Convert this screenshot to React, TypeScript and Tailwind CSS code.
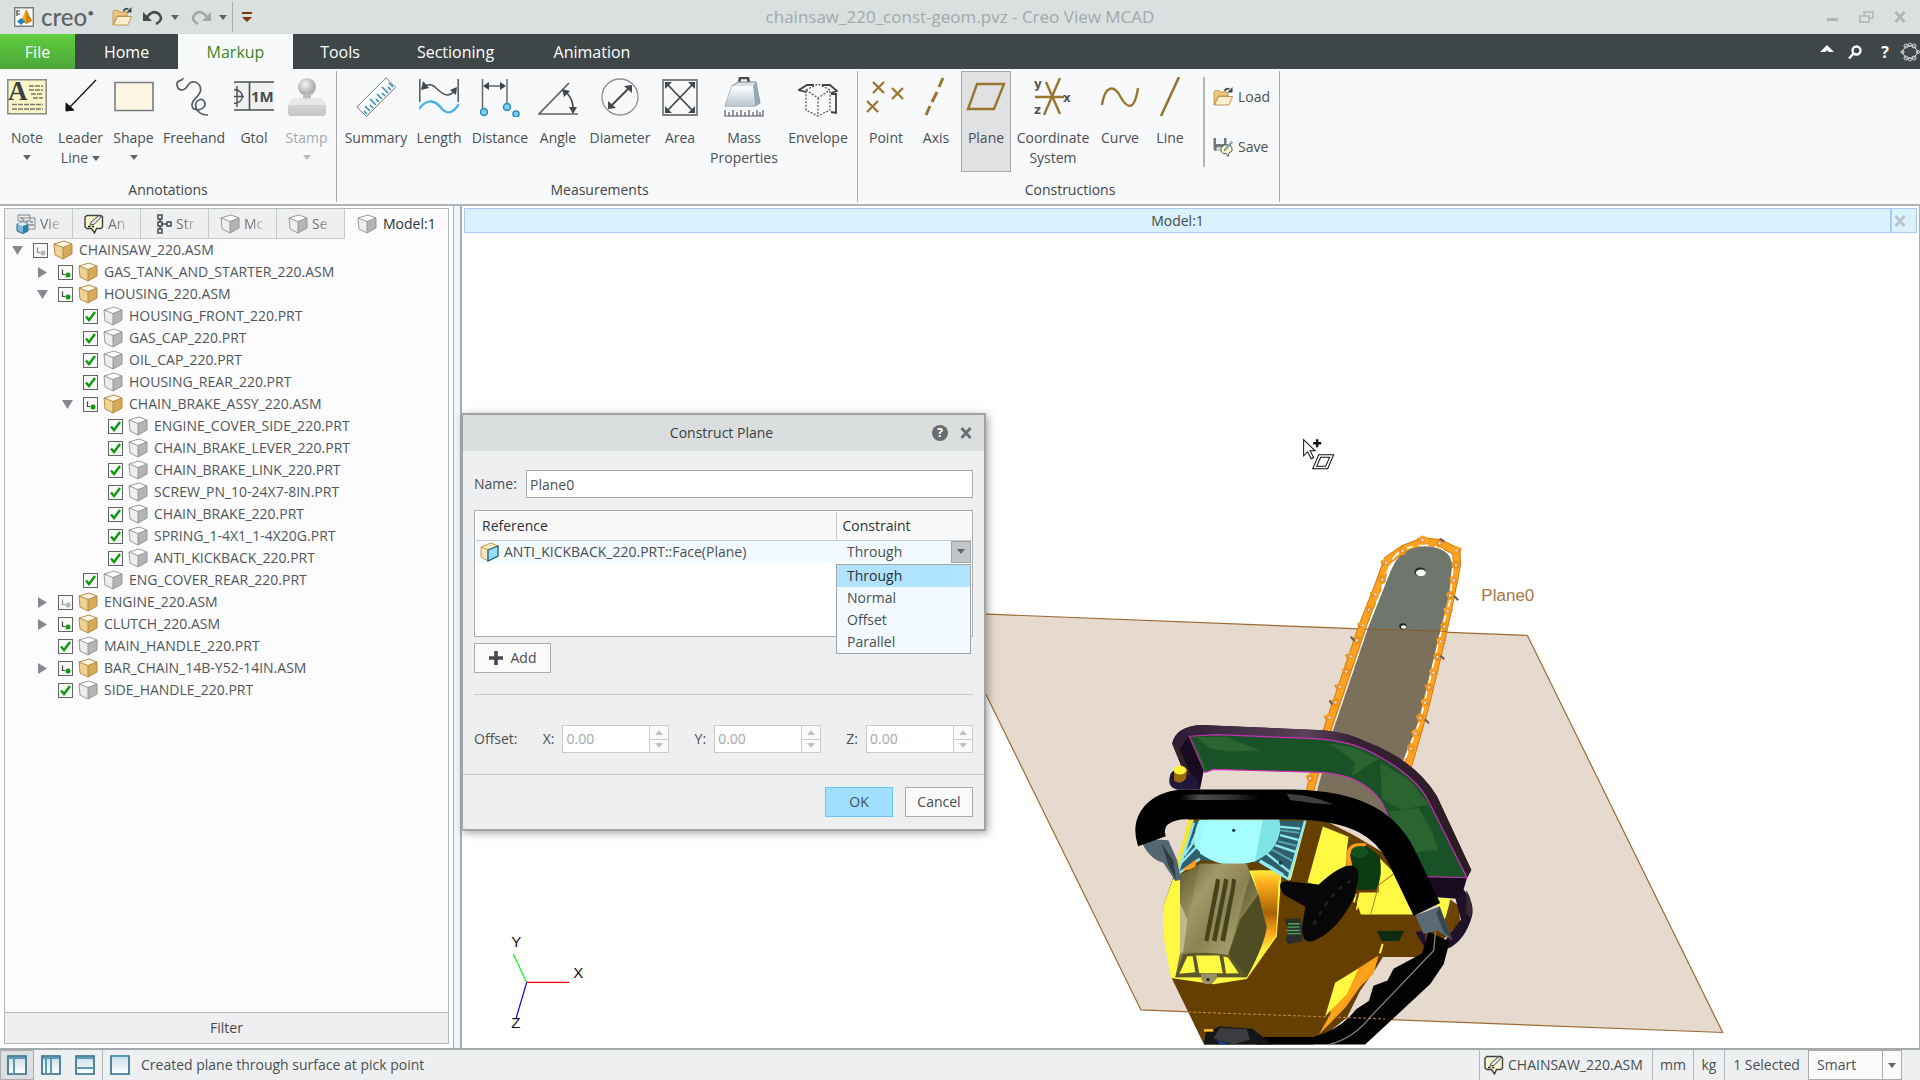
import React, { useState } from 'react';

type NodeState = 'on' | 'linked' | 'partial';

interface TreeItem {
  name: string;
  level: number;
  state: NodeState;
  arrow?: 'open' | 'closed';
}

const tree: TreeItem[] = [
  { name: 'CHAINSAW_220.ASM', level: 0, state: 'partial', arrow: 'open' },
  { name: 'GAS_TANK_AND_STARTER_220.ASM', level: 1, state: 'linked', arrow: 'closed' },
  { name: 'HOUSING_220.ASM', level: 1, state: 'linked', arrow: 'open' },
  { name: 'HOUSING_FRONT_220.PRT', level: 2, state: 'on' },
  { name: 'GAS_CAP_220.PRT', level: 2, state: 'on' },
  { name: 'OIL_CAP_220.PRT', level: 2, state: 'on' },
  { name: 'HOUSING_REAR_220.PRT', level: 2, state: 'on' },
  { name: 'CHAIN_BRAKE_ASSY_220.ASM', level: 2, state: 'linked', arrow: 'open' },
  { name: 'ENGINE_COVER_SIDE_220.PRT', level: 3, state: 'on' },
  { name: 'CHAIN_BRAKE_LEVER_220.PRT', level: 3, state: 'on' },
  { name: 'CHAIN_BRAKE_LINK_220.PRT', level: 3, state: 'on' },
  { name: 'SCREW_PN_10-24X7-8IN.PRT', level: 3, state: 'on' },
  { name: 'CHAIN_BRAKE_220.PRT', level: 3, state: 'on' },
  { name: 'SPRING_1-4X1_1-4X20G.PRT', level: 3, state: 'on' },
  { name: 'ANTI_KICKBACK_220.PRT', level: 3, state: 'on' },
  { name: 'ENG_COVER_REAR_220.PRT', level: 2, state: 'on' },
  { name: 'ENGINE_220.ASM', level: 1, state: 'partial', arrow: 'closed' },
  { name: 'CLUTCH_220.ASM', level: 1, state: 'linked', arrow: 'closed' },
  { name: 'MAIN_HANDLE_220.PRT', level: 1, state: 'on' },
  { name: 'BAR_CHAIN_14B-Y52-14IN.ASM', level: 1, state: 'linked', arrow: 'closed' },
  { name: 'SIDE_HANDLE_220.PRT', level: 1, state: 'on' },
];

/* ---------- small icons ---------- */

const Caret = ({ className = 'text-[#5f6467]' }: { className?: string }) => (
  <svg viewBox="0 0 8 5" className={`w-2 h-[5px] ${className}`} fill="currentColor"><path d="M0 0h8L4 5z" /></svg>
);

const Cross = ({ className = '' }: { className?: string }) => (
  <svg viewBox="0 0 12 12" className={`w-3 h-3 ${className}`} fill="none" stroke="currentColor" strokeWidth="2.800"><path d="M1.500 1l9 10M10.500 1l-9 10" /></svg>
);

const Cube = ({ gold = false }: { gold?: boolean }) => (
  <svg viewBox="0 0 20 20" className="w-5 h-5 shrink-0">
    <path d="M1 4L11 1l8 3v10l-9 5-8-4z" fill={gold ? '#f0d393' : '#eeeeee'} />
    <path d="M1 4l10-3 8 3-9 3.500z" fill={gold ? '#fbf3df' : '#ffffff'} />
    <path d="M10 7.500L19 4v10l-9 5z" fill={gold ? '#d9ab58' : '#b3b5b7'} />
    <path d="M1 4l10-3 8 3v10l-9 5-8-4zM1 4l9 3.500L19 4M10 7.500V19" fill="none" stroke={gold ? '#a88443' : '#8c8e90'} strokeWidth=".9" />
  </svg>
);

const FaceCube = () => (
  <svg viewBox="0 0 20 20" className="w-5 h-5 shrink-0">
    <path d="M1 5l10-4 7 3v10L8 19l-7-4z" fill="#fbe7bd" stroke="#c59b50" strokeWidth="1" />
    <path d="M1 5l7 3v11" fill="none" stroke="#c59b50" />
    <path d="M8 8l10-4v10L8 19z" fill="#9adcfb" stroke="#1c6683" strokeWidth="1.300" />
  </svg>
);

const Folder = () => (
  <svg viewBox="0 0 20 20" className="w-5 h-5 shrink-0">
    <path d="M1 5l1-1.500h4L7.500 5H15v4H5L1 18z" fill="#ecc57e" stroke="#b98d45" strokeWidth=".8" />
    <path d="M5.500 9.500H19.500L16 18H1.500z" fill="#fdf0cf" stroke="#b98d45" strokeWidth=".9" />
    <path d="M11.500 4Q13 .8 16.500 2" fill="none" stroke="#3f4446" strokeWidth="1.800" />
    <path d="M19.500 0v5.500h-5z" fill="#3f4446" />
  </svg>
);

const SaveIcon = () => (
  <svg viewBox="0 0 20 20" className="w-5 h-5 shrink-0">
    <path d="M.5 1h13v13H2L.5 12.500z" fill="#75797c" />
    <path d="M3 1h8v6H3z" fill="#f3f4f5" />
    <path d="M3.500 10h5v4h-5z" fill="#d3d5d7" />
    <path d="M8 11l3-3h6l2 3v3l-3 2-1 3.500-2-3h-3L8 14z" fill="#fdf9cf" stroke="#55595b" />
    <path d="M11 14l1-2.500L18.500 4.500l1 1L13 13z" fill="#8cc8e4" stroke="#55595b" strokeWidth=".6" />
  </svg>
);

const NoteBubble = () => (
  <svg viewBox="0 0 20 20" className="w-5 h-5 shrink-0">
    <path d="M3 1.500h14l1.500 1.500v10L17 14.500h-4.500l-2 4.500-3-4.500H3L1 13V3z" fill="#fdf9cf" stroke="#3d4143" strokeWidth="1.400" />
    <path d="M6 11l1.500-3.500L15 1.500l2 1.800-6.800 7z" fill="#e4e6e8" stroke="#44484a" strokeWidth="1" />
    <path d="M4 12.500h2.500M8 12.500h2" stroke="#222" strokeWidth="1.400" />
  </svg>
);

const ViewIcon = () => (
  <svg viewBox="0 0 20 20" className="w-5 h-5 shrink-0">
    <path d="M2 1h12v6H2zM7 4h12v11H7z" fill="#e9ebec" stroke="#84898c" />
    <path d="M4 4h3M10 8h2M14 8h3M13 11h5" stroke="#84898c" strokeWidth="1.400" />
    <path d="M1 10l6-2 5 2v7l-5 2.500L1 17z" fill="#7fb9d4" stroke="#1f5e7c" strokeWidth=".9" />
    <path d="M1 10l6-2 5 2-5 2z" fill="#def3fd" />
    <path d="M7 12l5-2v7l-5 2.500z" fill="#2d7ea5" />
  </svg>
);

const StructIcon = () => (
  <svg viewBox="0 0 20 20" className="w-5 h-5 shrink-0" fill="none" stroke="#44494c" strokeWidth="1.500">
    <path d="M6 1h4v4H6zM6 8h4v4H6zM6 15h4v4H6zM15 8h4v4h-4zM8 5v3M8 12v3M10 10h5" />
  </svg>
);

/* ---------- ribbon icons, 40x40 ---------- */

const Big = ({ children }: { children: React.ReactNode }) => (
  <svg viewBox="0 0 40 40" className="w-10 h-10" fill="none">{children}</svg>
);

const NoteBig = () => (
  <Big>
    <path d="M.8 2.800h38.400v34H.8z" fill="#fbf6c8" stroke="#888b84" strokeWidth="1.500" />
    <text x="1" y="23" fontFamily="Liberation Serif, serif" fontWeight="700" fontSize="27" fill="#3e3f3f">A</text>
    <path d="M22 9h14M22 13h14M24 17h12M26 21h10M5 27.500h31M5 32h31" stroke="#77776a" strokeWidth="1.300" strokeDasharray="5 1" />
  </Big>
);
const LeaderBig = () => (
  <Big><path d="M35 3L8 31" stroke="#111" strokeWidth="1.300" /><path d="M5 34v-8l8 7z" fill="#111" stroke="#111" /></Big>
);
const ShapeBig = () => <Big><path d="M1 5.500h38v28H1z" fill="#fef6e4" stroke="#7a7c7d" strokeWidth="1.600" /></Big>;
const FreehandBig = () => (
  <Big><path d="M9 1C9 5 2 2 3 8c1 6 6 6 9 3 3-4 4-7 9-6 6 2 7 8 4 12-3 5-7 6-7 11 0 6 8 6 12 2 3-4-1-9-5-7-5 2-4 9 0 12 3 3 6 3 9 3" stroke="#5b5f62" strokeWidth="1.700" /></Big>
);
const GtolBig = () => (
  <Big>
    <path d="M0 5h40v28H0z" fill="#f0f1f2" />
    <path d="M0 5h40M0 33h40M15.500 5v28" stroke="#4b4f52" strokeWidth="1.600" />
    <path d="M0 12.500c11 0 11 14 0 14M0 19.500h10M3 9v21" stroke="#4b4f52" strokeWidth="1.400" />
    <text x="17" y="25" fontFamily="Open Sans, sans-serif" fontWeight="700" fontSize="15" fill="#45494b">1M</text>
  </Big>
);
const StampBig = () => (
  <Big>
    <circle cx="20" cy="10" r="9" fill="url(#stampG)" />
    <path d="M16 17h8v6h-8z" fill="#bcbec0" />
    <path d="M5 21h30l4 8v8l-2 2H3l-2-2v-8z" fill="url(#stampB)" />
    <path d="M5 21h11q4 4 8 0h11l3 7H2z" fill="#e7e8ea" />
    <defs>
      <radialGradient id="stampG" cx=".4" cy=".35"><stop offset="0" stopColor="#f4f4f5" /><stop offset="1" stopColor="#aeb0b2" /></radialGradient>
      <linearGradient id="stampB" x2="0" y2="1"><stop offset="0" stopColor="#dcdddf" /><stop offset="1" stopColor="#c3c5c7" /></linearGradient>
    </defs>
  </Big>
);
const SummaryBig = () => (
  <Big>
    <path d="M.8 30L30 .8l9.500 9.500L10.500 39.500z" fill="#fbfcfd" stroke="#73787b" strokeWidth="1" strokeLinejoin="round" />
    <path d="M11 37l-3-3M14 34l-5-5M17 31l-3-3M20 28l-6-6M23 25l-3-3M26 22l-5-5M29 19l-3-3M32 16l-6-6M35 13l-3-3M37 10l-4-4" stroke="#3388b2" strokeWidth="1.500" />
  </Big>
);
const LengthBig = () => (
  <Big>
    <path d="M.8 2v23M39.200 2v23M4 10C16 2 18 17 28 18q5 0 9-6" stroke="#515659" strokeWidth="1.500" />
    <path d="M2 13l2-9 6 7zM38 10l-1 8-6-5z" fill="#45494b" />
    <path d="M0 32c9-12 17-8 23 0 6 6 11 4 17-5" stroke="#45b1e2" strokeWidth="2.300" />
  </Big>
);
const DistanceBig = () => (
  <Big>
    <path d="M2.500 2v29M27 2v24M6 9h17" stroke="#5f6467" strokeWidth="1.400" />
    <path d="M3 9l6-4v8zM26 9l-6-4v8z" fill="#3f4345" />
    <g fill="#7ccef2" stroke="#2f8eb6" strokeWidth="1.500"><circle cx="4" cy="35" r="3.500" /><circle cx="27" cy="30" r="3.500" /><circle cx="36" cy="37" r="3" /></g>
  </Big>
);
const AngleBig = () => (
  <Big>
    <path d="M31 6L1 37h39" stroke="#5d6265" strokeWidth="1.700" />
    <path d="M28 15q7 7 7 16" stroke="#45494b" strokeWidth="1.700" />
    <path d="M24 12l8 2-6 6zM31 30h8l-4 7z" fill="#45494b" />
  </Big>
);
const DiameterBig = () => (
  <Big>
    <circle cx="20" cy="20" r="18" stroke="#8d9194" strokeWidth="1.300" />
    <path d="M11 29L29 11" stroke="#45494b" strokeWidth="2" />
    <path d="M8 32v-8l8 7zM32 8v8l-8-7z" fill="#45494b" />
  </Big>
);
const AreaBig = () => (
  <Big>
    <path d="M3 3h34v35H3z" stroke="#7d8184" strokeWidth="1.800" />
    <path d="M8 8l24 25M32 8L8 33" stroke="#45494b" strokeWidth="1.800" />
    <path d="M5 5h7l-7 7zM35 5v7l-7-7zM5 36v-7l7 7zM35 36h-7l7-7z" fill="#45494b" />
  </Big>
);
const MassBig = () => (
  <Big>
    <path d="M15 6l1-5h8l1 5" stroke="#45494b" strokeWidth="2.500" />
    <path d="M8 9l6-4h18l4 21-5 3H1z" fill="#d7e0e6" stroke="#84898c" />
    <path d="M29 9l3-4 4 21-5 3z" fill="#8fa9b7" />
    <path d="M8 9h21l2 20H1z" fill="url(#massG)" />
    <path d="M1 33v6h38v-6M5 35v4M9 33v6M13 35v4M17 33v6M21 35v4M25 33v6M29 35v4M33 33v6M36 35v4" stroke="#55595c" strokeWidth="1.200" />
    <defs><linearGradient id="massG" x2="0" y2="1"><stop offset="0" stopColor="#ffffff" /><stop offset="1" stopColor="#b9c7cf" /></linearGradient></defs>
  </Big>
);
const EnvelopeBig = () => (
  <Big>
    <path d="M8 13l12-6 12 6v20l-12 6-12-6zM8 13l12 8 12-8M20 21v18" stroke="#55595c" strokeWidth="1.300" strokeDasharray="2 1.500" />
    <path d="M16 8H9L1 13l7 2M24 8h8l7 6-6 2M33 17h5v19l-5-1" stroke="#3f4345" strokeWidth="1.800" />
  </Big>
);
const gold = '#99752f';
const PointBig = () => <Big><path d="M7 5l11 11M18 5L7 16M26 11l11 11M37 11L26 22M1 24l11 11M12 24L1 35" stroke={gold} strokeWidth="2.200" /></Big>;
const AxisBig = () => <Big><path d="M27 1l-4 9M21 15l-5 10M14 29l-4 9" stroke={gold} strokeWidth="3" /></Big>;
const PlaneBig = () => <Big><path d="M11 7h27L28 32H2z" stroke={gold} strokeWidth="2.400" /></Big>;
const CoordBig = () => (
  <Big>
    <path d="M2 20h29M13 5l14 32M27 1L11 38" stroke={gold} strokeWidth="2.400" />
    <g fontFamily="DejaVu Sans, sans-serif" fontWeight="700" fontSize="12" fill="#515659"><text x="1" y="11">y</text><text x="30" y="25">x</text><text x="1" y="37">z</text></g>
  </Big>
);
const CurveBig = () => <Big><path d="M2 28C5 8 14 8 20 19s14 18 18-8" stroke={gold} strokeWidth="2.400" /></Big>;
const LineBig = () => <Big><path d="M29 0L11 39" stroke={gold} strokeWidth="2.600" /></Big>;

interface ToolProps {
  label: string;
  icon: React.ReactNode;
  width: string;
  second?: string;
  caret?: 'below' | 'inline';
  active?: boolean;
  disabled?: boolean;
}

const Tool = ({ label, icon, width, second, caret, active, disabled }: ToolProps) => (
  <button
    disabled={disabled}
    className={`${width} h-[101px] pt-[5px] shrink-0 flex flex-col items-center border leading-5 ${active ? 'bg-[#dfe1e3] border-[#a6aaac]' : 'border-transparent'} ${disabled ? 'text-[#a6abae]' : 'text-[#4a4f52]'}`}
  >
    {icon}
    <span className="mt-[11px] whitespace-nowrap">{label}</span>
    {second && (
      <span className="flex items-center gap-1">{second}{caret === 'inline' && <Caret />}</span>
    )}
    {caret === 'below' && <span className="h-[18px] flex items-center"><Caret className={disabled ? 'text-[#b5b9bc]' : 'text-[#5f6467]'} /></span>}
  </button>
);

const Group = ({ title, width, children }: { title: string; width: string; children: React.ReactNode }) => (
  <section className={`${width} shrink-0 my-[2px] border-r border-[#a9adb0] flex flex-col`}>
    <div className="flex flex-1">{children}</div>
    <h2 className="h-6 text-center leading-6 text-[#3f4446]">{title}</h2>
  </section>
);

const ribbonTabs = [
  { label: 'File', style: 'w-[75px] bg-linear-to-b from-[#61cf41] to-[#4ba637] text-white' },
  { label: 'Home', style: 'w-[103px] text-white' },
  { label: 'Markup', style: 'w-[115px] bg-[#f8f9fb] text-[#3f8527]' },
  { label: 'Tools', style: 'w-[94px] text-white' },
  { label: 'Sectioning', style: 'w-[137px] text-white' },
  { label: 'Animation', style: 'w-[136px] text-white' },
];

/* ---------- model tree ---------- */

const Check = ({ item }: { item: TreeItem }) => (
  <span className="relative w-[15px] h-[15px] shrink-0">
    <input type="checkbox" aria-label={item.name} defaultChecked={item.state === 'on'} className="appearance-none block w-[15px] h-[15px] border border-[#5f6467] bg-[#f6f8f3]" />
    <svg viewBox="0 0 15 15" className="absolute inset-0 pointer-events-none" fill="none">
      {item.state === 'on' && <path d="M3 7.500l3 3.500 6-8" stroke="#0d9a12" strokeWidth="2.400" />}
      {item.state !== 'on' && (
        <>
          <path d="M4.500 4.500v5H7" stroke={item.state === 'linked' ? '#444' : '#8d9194'} strokeWidth="1.200" />
          <circle cx="10" cy="10" r="2.500" fill={item.state === 'linked' ? '#0d9a12' : '#b3b6b8'} />
        </>
      )}
    </svg>
  </span>
);

const indents = ['pl-[7px]', 'pl-8', 'pl-[57px]', 'pl-[82px]'];

const TreeRow = ({ item }: { item: TreeItem }) => (
  <li className={`h-[22px] flex items-center ${indents[item.level]}`}>
    {item.arrow ? (
      <button aria-label={`Toggle ${item.name}`} className="w-5 mr-px flex">
        <svg viewBox="0 0 11 11" className="w-[11px] h-[11px]" fill="#85898c">
          {item.arrow === 'open' ? <path d="M0 1h11L5.500 10z" /> : <path d="M1 0l9 5.500L1 11z" />}
        </svg>
      </button>
    ) : <span className="w-5 mr-px" />}
    <Check item={item} />
    <span className="w-[5px]" />
    <Cube gold={item.name.endsWith('.ASM')} />
    <span className="ml-[6px] text-[#515659] whitespace-nowrap">{item.name}</span>
  </li>
);

const sideTabs = [
  { label: 'Vie', icon: <ViewIcon /> },
  { label: 'An', icon: <NoteBubble /> },
  { label: 'Str', icon: <StructIcon /> },
  { label: 'Mc', icon: <Cube /> },
  { label: 'Se', icon: <Cube /> },
];

const SidePanel = () => (
  <aside className="w-[454px] shrink-0 pl-1 pr-1 pt-[2px] pb-1 flex flex-col bg-white border-r border-[#a4b0b2]">
    <div className="flex-1 min-h-0 flex flex-col border border-[#b3b8ba] bg-[#fcfcfe]">
      <div className="h-[30px] flex">
        {sideTabs.map(t => (
          <button key={t.label} className="w-[68px] shrink-0 pl-[11px] flex items-center gap-1 bg-[#eeeff1] border-r border-b border-[#c6cacc] text-[#6d7275]">
            {t.icon}
            <span className="w-6 text-left whitespace-nowrap mask-r-from-30% mask-r-to-100%">{t.label}</span>
          </button>
        ))}
        <button className="flex-1 pl-3 flex items-center gap-[6px] text-[#2d3133]"><Cube />Model:1</button>
      </div>
      <ul className="flex-1 min-h-0 overflow-hidden">
        {tree.map(item => <TreeRow key={item.name} item={item} />)}
      </ul>
      <button className="h-[31px] border-t border-[#b3b8ba] bg-[#eeeff1] text-[#45494b]">Filter</button>
    </div>
  </aside>
);

/* ---------- dialog ---------- */

const constraints = ['Through', 'Normal', 'Offset', 'Parallel'];

const Spin = ({ axis }: { axis: string }) => (
  <div className="flex items-center gap-2">
    <label htmlFor={`offset-${axis}`}>{axis}:</label>
    <div className="w-[107px] h-7 flex border border-[#c9ccce] bg-[#fafafb]">
      <input id={`offset-${axis}`} disabled defaultValue="0.00" className="w-0 flex-1 px-[3px] bg-white text-[#a3a7aa]" />
      <div className="w-[19px] flex flex-col border-l border-[#c9ccce]">
        <button disabled aria-label={`${axis} up`} className="flex-1 flex items-center justify-center border-b border-[#c9ccce]"><Caret className="rotate-180 text-[#c0c3c5]" /></button>
        <button disabled aria-label={`${axis} down`} className="flex-1 flex items-center justify-center"><Caret className="text-[#c0c3c5]" /></button>
      </div>
    </div>
  </div>
);

const ConstructPlaneDialog = () => {
  const [constraint, setConstraint] = useState('Through');
  return (
    <div role="dialog" aria-label="Construct Plane" className="absolute -left-px top-[207px] w-[525px] border-2 border-[#a0a4a6] bg-[#eeeff1] text-[#4a4f52] shadow-[2px_2px_8px_rgba(0,0,0,0.35)]">
      <header className="h-9 pr-3 flex items-center bg-[#dadedf]">
        <h1 className="flex-1 pl-12 text-center text-[#3a3e40]">Construct Plane</h1>
        <button aria-label="Help" className="w-4 h-4 mr-3 rounded-full bg-[#6a6e71] text-white text-xs font-bold leading-4">?</button>
        <button aria-label="Close"><Cross className="text-[#6a6e71]" /></button>
      </header>

      <div className="px-[11px] pt-[19px]">
        <div className="flex items-center justify-between">
          <label htmlFor="plane-name">Name:</label>
          <input id="plane-name" defaultValue="Plane0" className="w-[447px] h-7 px-[3px] border border-[#a9adb0] bg-white" />
        </div>

        <div className="relative mt-3 h-[127px] p-px border border-[#a9adb0] bg-white">
          <table className="w-full table-fixed">
            <thead>
              <tr className="h-7 bg-[#f9f9fa] border-b border-[#c6cacc] text-left text-[#2d3133]">
                <th className="pl-[6px] font-normal border-r border-[#c6cacc]">Reference</th>
                <th className="w-[135px] pl-[6px] font-normal">Constraint</th>
              </tr>
            </thead>
            <tbody>
              <tr className="h-[22px] bg-[#f2faff]">
                <td className="p-0 pl-1"><span className="flex items-center gap-1"><FaceCube />ANTI_KICKBACK_220.PRT::Face(Plane)</span></td>
                <td className="p-0">
                  <div className="flex h-[22px]">
                    <select aria-label="Constraint" value={constraint} onChange={e => setConstraint(e.target.value)} className="w-0 flex-1 pl-[11px] appearance-none bg-transparent">
                      {constraints.map(c => <option key={c}>{c}</option>)}
                    </select>
                    <button aria-label="Open list" className="w-5 flex items-center justify-center border border-[#a0a4a6] bg-[#c3c6c9]"><Caret /></button>
                  </div>
                </td>
              </tr>
            </tbody>
          </table>
          <ul role="listbox" aria-label="Constraints" className="absolute right-px top-[53px] w-[135px] border border-[#a0a4a6] bg-[#f2faff]">
            {constraints.map(c => (
              <li key={c} role="option" aria-selected={c === constraint} onClick={() => setConstraint(c)} className={`h-[22px] pl-[10px] leading-[22px] ${c === constraint ? 'bg-[#b0e3ff] text-[#2d3133]' : ''}`}>{c}</li>
            ))}
          </ul>
        </div>

        <button className="mt-[6px] w-[77px] h-[30px] flex items-center justify-center gap-2 border border-[#a9adb0] bg-[#fafafb]">
          <svg viewBox="0 0 14 14" className="w-[14px] h-[14px]" fill="none" stroke="#45494b" strokeWidth="3.600"><path d="M7 0v14M0 7h14" /></svg>
          Add
        </button>

        <hr className="mt-[21px] border-[#c6cacc]" />

        <div className="mt-[30px] mb-[21px] flex items-center justify-between">
          <span>Offset:</span>
          <Spin axis="X" />
          <Spin axis="Y" />
          <Spin axis="Z" />
        </div>
      </div>

      <footer className="px-[11px] pt-3 pb-3 flex justify-end gap-3 border-t border-[#c0c4c6]">
        <button className="w-[68px] h-[30px] border border-[#6fc4f0] bg-[#a0dfff]">OK</button>
        <button className="w-[68px] h-[30px] border border-[#a9adb0] bg-[#fafafb]">Cancel</button>
      </footer>
    </div>
  );
};

/* ---------- 3D scene ---------- */

const leftChain = [[630, 762], [688, 583], [706, 538], [720, 492], [738, 447], [752, 402], [770, 354], [788, 310], [806, 264], [826, 219], [846, 175], [858, 125], [907, 90], [967, 58]];
const rightChain = [[1018, 68], [1068, 89], [1067, 132], [1060, 177], [1050, 222], [1042, 268], [1032, 314], [1021, 358], [1011, 404], [999, 450], [986, 494], [974, 539], [960, 584], [946, 630], [932, 675]];
const chain = [...leftChain, ...rightChain];

const Chainsaw = () => (
  <g transform="translate(1100 520) scale(.3333 .338)">
    <defs>
      <linearGradient id="tube" x2="1" y2="0"><stop offset="0" stopColor="#000" /><stop offset=".25" stopColor="#4c4c4c" /><stop offset=".6" stopColor="#363636" /><stop offset="1" stopColor="#000" /></linearGradient>
      <linearGradient id="shroud" x2="0" y2="1"><stop offset="0" stopColor="#fff23c" /><stop offset=".12" stopColor="#ffad1c" /><stop offset=".4" stopColor="#a86205" /><stop offset=".58" stopColor="#ffa51c" /><stop offset=".75" stopColor="#fff23c" /></linearGradient>
      <linearGradient id="khaki" x2="1" y2="1"><stop offset="0" stopColor="#565228" /><stop offset=".35" stopColor="#a79c66" /><stop offset=".5" stopColor="#6d683c" /><stop offset=".7" stopColor="#9c935f" /><stop offset="1" stopColor="#5c5830" /></linearGradient>
      <linearGradient id="panel" x2="1" y2="1"><stop offset="0" stopColor="#6b663a" /><stop offset=".3" stopColor="#a3986a" /><stop offset=".55" stopColor="#8c8355" /><stop offset="1" stopColor="#b5ab78" /></linearGradient>
      <linearGradient id="rim" x2="1" y2="0"><stop offset="0" stopColor="#2f1a35" /><stop offset=".45" stopColor="#5a4258" /><stop offset=".6" stopColor="#38213a" /><stop offset="1" stopColor="#2b1a20" /></linearGradient>
      <linearGradient id="glow" x2="1" y2="1"><stop offset="0" stopColor="#b06a08" /><stop offset=".5" stopColor="#ffa51c" /><stop offset="1" stopColor="#b06a08" /></linearGradient>
    </defs>

    {/* guide bar and chain */}
    <path d="M612 860L684 610 790 305 832 200 862 118 910 85 970 62 1020 68 1068 92 1070 130 1048 240 1022 358 975 550 925 720 900 800" fill="none" stroke="#cf7d10" strokeWidth="25" />
    <path d="M612 860L684 610 790 305 832 200 862 118 910 85 970 62 1020 68 1068 92 1070 130 1048 240 1022 358 975 550 925 720 900 800" fill="none" stroke="#ffa21f" strokeWidth="19" />
    <path d="M640 860L700 620 802 320 866 140Q885 74 975 74 1055 77 1057 140L1050 235 1018 345 960 590 905 730" fill="none" stroke="#fff" strokeWidth="5" strokeDasharray="28 18" />
    <path d="M632 870L699 620 803 320 872 150Q900 78 975 77 1050 80 1055 130L1045 220 1015 345 955 590 905 720 860 900z" fill="#7b705b" />
    <path d="M803 321L872 150Q900 78 975 77 1050 80 1055 130L1045 220 1018 328z" fill="#6e766d" />
    <path d="M790 321L1040 328" stroke="#8b5a1e" strokeWidth="3" />
    {chain.map(([x, y], i) => (
      <g key={i}>
        <path d={`M${x - 13} ${y - 6}l12-8 14 6-4 18-14 4z`} fill={i % 2 ? '#ffa21f' : '#f29616'} />
        {i % 2 === 1 && <path d={i < 14 ? `M${x - 15} ${y - 6}l6 14` : `M${x + 14} ${y - 6}l-6 14`} stroke="#e08d1c" strokeWidth="5" />}
        <circle cx={x} cy={y} r="5" fill="#ecd9cf" stroke="#a9702d" strokeWidth="1.500" />
      </g>
    ))}
    <path d="M752 344l10 12M1062 224l12 12M1020 400l12 10M688 532l8 12M974 588l12 12M1018 54l14 8" stroke="#5e5a60" strokeWidth="6" />
    <ellipse cx="960" cy="152" rx="17" ry="13" fill="#222" /><ellipse cx="962" cy="155" rx="15" ry="10" fill="#fff" />
    <ellipse cx="908" cy="313" rx="11" ry="9" fill="#222" /><ellipse cx="910" cy="315" rx="8" ry="5" fill="#fff" />

    {/* body */}
    <path d="M270 870H640L760 930 880 1000 950 1165 1075 1140 1080 1190 975 1290H848L830 1320 780 1390 740 1470 640 1549H312L215 1352 190 1140 232 1020z" fill="#653f00" />
    <path d="M265 885h18l-50 160-5-25z" fill="#f7e636" />
    <path d="M218 1062L245 1045 455 1035 545 1033 530 1230 440 1355 340 1371 213 1352 192 1235 190 1140z" fill="#fff942" />
    <path d="M455 1036L548 1033 535 1070 528 1225 440 1352 500 1200 475 1105z" fill="url(#shroud)" />
    <path d="M480 1010l10 24h60l50-145h20l-46 175z" fill="#653f00" />
    <path d="M605 888h14L572 1062h-10z" fill="#fff942" />
    <path d="M668 905L745 935 740 975 738 1020 660 1078 622 1070z" fill="#fff942" />
    <path d="M738 1000Q735 945 800 955L780 985Q755 985 758 1020L740 1025z" fill="#ff9d1c" />
    <path d="M840 1000L880 1040 952 1165H782L770 1130 778 1100H835z" fill="#fff942" />
    <path d="M1005 1115L1056 1118 1028 1195z" fill="#fff942" />
    <path d="M1050 1120l28 20-30 100-18-40z" fill="#6f4300" />
    <path d="M880 1045l-44 32-24 85" fill="none" stroke="#b9821a" strokeWidth="3" />
    <path d="M764 1102l6 2-6 26-5-2zM772 1130l5 2-6 20-4-3zM845 1250l5 3-8 28-6-3z" fill="#fff942" />
    <path d="M705 1366L835 1286 820 1340 780 1378 735 1440 656 1520 690 1460z" fill="url(#glow)" />
    <path d="M705 1366L775 1325 740 1400 675 1465z" fill="#fff942" />
    <path d="M830 1214L912 1213 897 1243H846z" fill="#0b2c10" />
    <path d="M945 1215h30v50z" fill="#1e1034" />

    {/* starter fan */}
    <path d="M280 888H615L565 1060 480 1010 300 1005 232 1046z" fill="#2f5f6b" />
    <path d="M282 893L232 1046 300 1000M615 888L565 1060 478 1008M535 905l65 6M540 930l55 14M525 960l62 20M500 985l70 55M480 1005l70 42M300 900l-25 55M295 930l-42 60M290 965l-50 50" fill="none" stroke="#8fe9f3" strokeWidth="7" />
    <path d="M535 915l62 8M534 948l58 14M515 972l62 34" fill="none" stroke="#55a4b2" strokeWidth="6" />
    <path d="M298 885H537Q548 935 510 978 470 1015 400 1019 320 1015 283 960 280 920 298 885z" fill="#9afafc" />
    <path d="M325 885H488L465 1008Q370 1030 300 985 300 930 325 885z" fill="#a6fdff" />
    <path d="M537 885Q548 935 510 978L465 1008 488 885z" fill="#80e3e7" />
    <circle cx="401" cy="916" r="5" fill="#104048" /><circle cx="542" cy="1012" r="6" fill="#104048" />
    <path d="M245 1035L290 1000 285 1030z" fill="#ff9d1c" />

    {/* cylinder cover */}
    <path d="M300 1015H440L475 1105 500 1200Q495 1250 440 1350H226L240 1280 240 1048z" fill="url(#khaki)" />
    <path d="M300 1015H440L450 1050 385 1282 250 1276 262 1180z" fill="url(#panel)" />
    <path d="M240 1130L262 1180 250 1276 240 1280z" fill="#c2b889" />
    <path d="M475 1105L500 1200Q495 1250 440 1350L385 1282 420 1180z" fill="#504d24" />
    <g fill="#45421c"><path d="M348 1058l12 4-3 25-32 158-12-4 30-155zM372 1058l13 4-4 25-32 158-13-4 32-155zM396 1058l12 4-3 25-30 158-14-4 32-155z" /></g>
    <path d="M250 1282Q320 1272 390 1286L440 1350H226z" fill="#5b582c" />
    <path d="M262 1288H278L286 1335 238 1340zM288 1286H358L368 1338H298zM370 1288l14 4 32 46-38 1z" fill="#fff942" />
    <path d="M303 1340h47v14l-14 16h-22l-10-12z" fill="#9a9164" /><circle cx="324" cy="1357" r="5" fill="#222" />

    {/* filler cap, throttle, module */}
    <path d="M750 990Q752 962 800 963L838 992Q850 1050 828 1090L772 1093z" fill="#0c3a12" />
    <ellipse cx="778" cy="980" rx="26" ry="18" fill="#165220" />
    <path d="M555 1178l45-2 8 68-44 8-8-14 8-28z" fill="#2b2e2d" /><path d="M564 1192h35M562 1202h37M560 1212h40M562 1221h40" stroke="#4ea65a" strokeWidth="4" />
    <path d="M540 1078Q542 1064 570 1067L655 1077Q715 1022 750 1020 778 1020 774 1060L765 1110Q710 1215 645 1240 608 1258 605 1205L616 1142 552 1106Q540 1095 540 1078z" fill="#070707" />
    <path d="M640 1195q60-110 115-130" fill="none" stroke="#222" strokeWidth="8" strokeDasharray="14 18" />

    {/* rear handle */}
    <path d="M1085 1085Q1125 1130 1115 1170 1095 1240 1045 1265L1035 1240 1082 1180 1065 1115z" fill="#1f1128" />
    <path d="M1098 1092Q1122 1130 1112 1175L1098 1160z" fill="#3a2932" />
    <path d="M985 1215L1048 1245 1030 1312 990 1370 795 1549H470L490 1527H640Q720 1505 768 1445L806 1420 820 1375 862 1360 880 1325 965 1280z" fill="#020202" />
    <path d="M1006 1215L1000 1272 810 1468Q760 1530 690 1548" fill="none" stroke="#838383" strokeWidth="4" />
    <path d="M312 1549l5-35 40-18 100 6 60 47z" fill="#141517" /><path d="M360 1500l80 4 10 30-50 15-60-18z" fill="#3a3c40" /><path d="M312 1503h28v8h-28z" fill="#ffb322" /><path d="M350 1535l40 14h-30z" fill="#1c3f91" />

    {/* hand guard */}
    <path d="M217 660Q225 612 300 605L670 620Q745 628 800 655 945 710 1010 815L1113 1033 1100 1057 1090 1090 1070 1118 960 1110 940 1052 840 800 640 690 340 660 310 745 300 795 262 770z" fill="#180b1f" />
    <path d="M217 660Q225 612 300 605L670 620Q745 628 800 655 945 710 1010 815L1113 1033 1100 1057 985 830Q950 760 840 700 760 650 640 645L268 636 235 680z" fill="url(#rim)" />
    <path d="M217 660L236 668 282 770 262 770z" fill="#352029" />
    <path d="M268 638L350 633 640 645Q760 650 840 700 950 760 985 830L1100 1056 952 1052 855 855Q835 800 760 765 710 745 640 744L340 736 315 745z" fill="#1a5227" stroke="#cc2fb7" strokeWidth="3.500" />
    <path d="M290 640l90 0 100 40-90 4-60-10zM690 660l65 10 80 35-80 50 10-40zM840 715l90 55 55 70-80 15-60-30zM865 860l90-10 40 70 20 55q-60 0-95 15z" fill="#2c6431" />
    <path d="M280 650l40 88-8 4z" fill="#2c6431" />

    {/* screw on the guard */}
    <path d="M208 765Q210 735 235 740L290 760 300 795 232 796Q205 790 208 765z" fill="#21173c" />
    <path d="M222 735v34q18 14 35-4l5-30z" fill="#9c6a0c" /><ellipse cx="240" cy="738" rx="19" ry="13" fill="#fff234" />

    {/* front handle */}
    <path d="M120 940L205 945 232 1005 243 1062 226 1066 190 1012Q145 1000 120 940z" fill="#536672" />
    <path d="M185 955l35 50 8 55-22-40z" fill="#2d3c45" />
    <path d="M156 948C130 875 195 839 260 839H580C770 843 855 900 900 985L980 1150" fill="none" stroke="#000" strokeWidth="88" />
    <path d="M240 810H480V826H240z" fill="url(#tube)" /><path d="M560 808Q640 812 700 840L640 836 570 826z" fill="#3e3e3e" />
    <path d="M945 1168L1018 1140 1056 1240 1010 1212 970 1222z" fill="#5a6b76" />
    <path d="M1018 1140L1056 1240 1030 1215 1008 1160z" fill="#37474f" />
  </g>
);

const Scene = () => (
  <svg viewBox="462 233 1457 814" preserveAspectRatio="xMidYMid slice" className="absolute inset-0 w-full h-full">
    <path d="M946 612L1527 635 1722 1031.500 1141 1009z" fill="#e6d9ce" stroke="#9c6a33" strokeWidth="1.200" />
    <Chainsaw />
    <path d="M1188 1011L1385 1018" stroke="#c48a3a" strokeDasharray="3 2" />
    <text x="1481" y="601" fontFamily="Liberation Sans, sans-serif" fontSize="17" fill="#a87743">Plane0</text>

    {/* orientation axes */}
    <g fill="none" strokeWidth="1.200">
      <path d="M527.500 981.500L514 953" stroke="#00ff00" />
      <path d="M527.500 981.500H570" stroke="#ff0000" />
      <path d="M527.500 981.500L517 1017" stroke="#0000ff" />
    </g>
    <g fontFamily="Liberation Sans, sans-serif" fontSize="15" fill="#111">
      <text x="512" y="946">Y</text><text x="574" y="977">X</text><text x="512" y="1027">Z</text>
    </g>

    {/* cursor */}
    <g fill="#fff" stroke="#111">
      <path d="M1303.500 439.500v16l4-4 3.500 7 2.500-1-3.500-7h5z" />
      <path d="M1318.500 454.500h15l-6 14h-15z" />
      <path d="M1320.500 457h9l-4 9h-9z" />
      <path d="M1313 443h8M1317 439v8" strokeWidth="2.400" />
    </g>
  </svg>
);

const Pane = ({ d }: { d: string }) => (
  <svg viewBox="0 0 20 20" className="w-5 h-5 shrink-0">
    <defs><linearGradient id="paneG" x2="0" y2="1"><stop offset="0" stopColor="#c9dde8" /><stop offset="1" stopColor="#ffffff" /></linearGradient></defs>
    <path d="M1 1h18v18H1z" fill="url(#paneG)" stroke="#276b88" strokeWidth="1.600" />
    <path d={d} fill="none" stroke="#5d9ab5" strokeWidth="2" />
  </svg>
);

export default function App() {
  return (
    <div className="h-screen flex flex-col overflow-hidden bg-white text-[14px] leading-5 text-[#4a4f52] font-['Open_Sans','Noto_Sans',sans-serif]">
      {/* Title bar */}
      <header className="relative h-[34px] shrink-0 flex items-center pl-[14px] bg-[#dae0df]">
        <svg viewBox="0 0 20 20" className="w-5 h-5">
          <path d="M.7.7h18.600v18.600H.7z" fill="#fff" stroke="#777b7d" strokeWidth="1.400" />
          <path d="M12 2l6 12-6 3-5-3z" fill="#f5a623" /><path d="M12 2l6 12-6 3z" fill="#d9820e" />
          <path d="M7 11l4 3.500L7 18l-4-3.500z" fill="#1c86c9" /><path d="M3 3v6M3 4h3M3 7h3" stroke="#444" strokeWidth="1.200" />
        </svg>
        <span className="ml-[7px] w-[50px] text-2xl leading-8 font-medium text-[#5f6366] font-['Lato',sans-serif]">creo<span className="text-xs align-top leading-6">•</span></span>
        <div className="ml-[21px] flex items-center text-[#45494b]">
          <button aria-label="Open"><Folder /></button>
          <button aria-label="Undo" className="ml-[11px]">
            <svg viewBox="0 0 20 16" className="w-5 h-4" fill="none"><path d="M4 8q6-8 12-3 5 6-3 10" stroke="#45494b" strokeWidth="2.600" /><path d="M0 3v9h9z" fill="#45494b" /></svg>
          </button>
          <button aria-label="Undo list" className="ml-2"><Caret /></button>
          <button aria-label="Redo" className="ml-3">
            <svg viewBox="0 0 20 16" className="w-5 h-4" fill="none"><path d="M16 8q-6-8-12-3-5 6 3 10" stroke="#a3a7a8" strokeWidth="2.600" /><path d="M20 3v9h-9z" fill="#a3a7a8" /></svg>
          </button>
          <button aria-label="Redo list" className="ml-2"><Caret /></button>
          <span className="ml-[5px] w-px h-[30px] bg-[#a9adaf]" />
          <button aria-label="Customize" className="ml-[9px]">
            <svg viewBox="0 0 10 12" className="w-[10px] h-3" fill="#7a3a0a"><path d="M0 1h10v2H0zM0 6h10l-5 5z" /></svg>
          </button>
        </div>
        <div className="absolute inset-0 pointer-events-none flex items-center justify-center text-[17px] text-[#a3a8aa]">chainsaw_220_const-geom.pvz - Creo View MCAD</div>
        <div className="ml-auto pr-[14px] flex items-center gap-5 text-[#b0b5b6]">
          <button aria-label="Minimize"><svg viewBox="0 0 12 12" className="w-3 h-3"><path d="M0 7h11v3H0z" fill="currentColor" /></svg></button>
          <button aria-label="Restore"><svg viewBox="0 0 15 12" className="w-[15px] h-3" fill="none" stroke="currentColor" strokeWidth="1.500"><path d="M1 5h9v6H1zM5 5V1h9v6h-4" /></svg></button>
          <button aria-label="Close window"><Cross /></button>
        </div>
      </header>

      {/* Ribbon tabs */}
      <nav className="h-[35px] shrink-0 flex bg-[#3e4648] text-base">
        {ribbonTabs.map(t => <button key={t.label} className={t.style}>{t.label}</button>)}
        <div className="ml-auto flex items-center text-white">
          <button aria-label="Collapse ribbon" className="mr-[14px]"><svg viewBox="0 0 14 14" className="w-[14px] h-[14px]" fill="#fff"><path d="M7 0l7 7H9L7 5.500 5 7H0z" /></svg></button>
          <button aria-label="Search" className="mr-[18px]"><svg viewBox="0 0 14 14" className="w-[14px] h-[14px]" fill="none" stroke="#fff" strokeWidth="2.400"><circle cx="8.500" cy="5.500" r="4" /><path d="M5.500 8.500l-4.500 5" /></svg></button>
          <button aria-label="Help center" className="mr-[10px] w-[10px] font-bold">?</button>
          <button aria-label="Community">
            <svg viewBox="0 0 20 20" className="w-5 h-5" fill="none" stroke="#d5d9da" strokeWidth="1">
              <path d="M6 4h8l4 6-4 6H6L2 10z" /><circle cx="6" cy="4" r="2" /><circle cx="14" cy="4" r="2" /><circle cx="18" cy="10" r="1.500" /><circle cx="14" cy="16" r="2" /><circle cx="6" cy="16" r="2" /><circle cx="2.500" cy="10" r="1.500" /><circle cx="10" cy="2.500" r="1.500" /><circle cx="10" cy="17.500" r="1.500" />
            </svg>
          </button>
        </div>
      </nav>

      {/* Ribbon */}
      <div className="h-[137px] shrink-0 flex bg-[#f8f9fb] border-b-2 border-[#b0b6b8]">
        <Group title="Annotations" width="w-[337px]">
          <Tool label="Note" icon={<NoteBig />} width="w-[54px]" caret="below" />
          <Tool label="Leader" second="Line" icon={<LeaderBig />} width="w-[53px]" caret="inline" />
          <Tool label="Shape" icon={<ShapeBig />} width="w-[53px]" caret="below" />
          <Tool label="Freehand" icon={<FreehandBig />} width="w-[68px]" />
          <Tool label="Gtol" icon={<GtolBig />} width="w-[52px]" />
          <Tool label="Stamp" icon={<StampBig />} width="w-[53px]" caret="below" disabled />
        </Group>
        <Group title="Measurements" width="w-[521px] pl-[5px]">
          <Tool label="Summary" icon={<SummaryBig />} width="w-[68px]" />
          <Tool label="Length" icon={<LengthBig />} width="w-[58px]" />
          <Tool label="Distance" icon={<DistanceBig />} width="w-[64px]" />
          <Tool label="Angle" icon={<AngleBig />} width="w-[52px]" />
          <Tool label="Diameter" icon={<DiameterBig />} width="w-[72px]" />
          <Tool label="Area" icon={<AreaBig />} width="w-[48px]" />
          <Tool label="Mass" second="Properties" icon={<MassBig />} width="w-[80px]" />
          <Tool label="Envelope" icon={<EnvelopeBig />} width="w-[68px]" />
        </Group>
        <Group title="Constructions" width="w-[422px] pl-[3px]">
          <Tool label="Point" icon={<PointBig />} width="w-[50px]" />
          <Tool label="Axis" icon={<AxisBig />} width="w-[50px]" />
          <Tool label="Plane" icon={<PlaneBig />} width="w-[50px]" active />
          <Tool label="Coordinate" second="System" icon={<CoordBig />} width="w-[84px]" />
          <Tool label="Curve" icon={<CurveBig />} width="w-[50px]" />
          <Tool label="Line" icon={<LineBig />} width="w-[50px]" />
          <div className="ml-2 mt-[6px] h-[90px] pl-2 flex flex-col justify-between border-l-2 border-[#b3b7b9]">
            <button className="h-10 flex items-center gap-[5px]"><Folder />Load</button>
            <button className="h-10 flex items-center gap-[5px]"><SaveIcon />Save</button>
          </div>
        </Group>
      </div>

      {/* Work area */}
      <div className="flex-1 min-h-0 flex">
        <SidePanel />
        <div className="w-[6px] shrink-0 bg-[#f0f7fc]" />
        <main className="relative flex-1 min-w-0 flex flex-col border-l-2 border-r border-[#a9aeb0] bg-white">
          <div className="mt-[2px] mx-[2px] h-[25px] shrink-0 flex items-center border border-[#a9cbfa] bg-[#daf2fe] text-[#45494b]">
            <div className="flex-1 text-center">Model:1</div>
            <button aria-label="Close view" className="w-[26px] h-full pl-[2px] flex items-center border-l-2 border-[#a9cbfa]"><Cross className="text-[#b8c3ca]" /></button>
          </div>
          <div className="relative flex-1 min-h-0 overflow-hidden"><Scene /></div>
          <ConstructPlaneDialog />
        </main>
      </div>

      {/* Status bar */}
      <footer className="h-8 shrink-0 flex items-stretch border-t-2 border-[#a4a9ab] bg-[#eeeff1]">
        <button aria-label="Tree pane" className="w-[34px] flex items-center justify-center border border-[#a9adb0] bg-[#dcdee0]"><Pane d="M1 3h18M7 3v16" /></button>
        <button aria-label="Split pane" className="w-[34px] flex items-center justify-center"><Pane d="M1 3h18M5 3v16M10 3v16" /></button>
        <button aria-label="Bottom pane" className="w-[34px] flex items-center justify-center"><Pane d="M1 3h18M1 13h18" /></button>
        <div className="flex items-center gap-[11px] pl-[7px] border-l border-[#b3b7b9]"><Pane d="M1 1h18" />Created plane through surface at pick point</div>
        <div className="ml-auto flex items-stretch">
          <div className="w-[173px] pl-1 flex items-center gap-1 border-l border-[#b3b7b9]"><NoteBubble />CHAINSAW_220.ASM</div>
          <div className="w-[41px] flex items-center justify-center border-l border-[#b3b7b9]">mm</div>
          <div className="w-[31px] flex items-center justify-center border-l border-[#b3b7b9]">kg</div>
          <div className="w-[84px] flex items-center justify-center whitespace-nowrap border-l border-[#b3b7b9]">1 Selected</div>
          <div className="relative w-[94px] mr-[18px] flex border border-[#a9adb0] bg-[#fafafb]">
            <select aria-label="Selection filter" className="w-full pl-2 appearance-none"><option>Smart</option></select>
            <span className="absolute right-0 inset-y-0 w-[19px] flex items-center justify-center border-l border-[#a9adb0] pointer-events-none"><Caret /></span>
          </div>
        </div>
      </footer>
    </div>
  );
}
